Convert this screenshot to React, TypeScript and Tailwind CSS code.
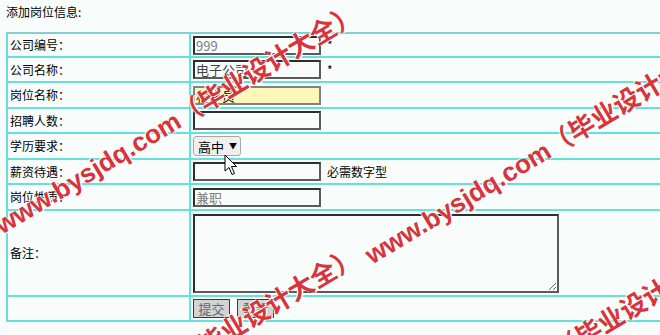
const LINE = 'border-[#66e0da]'

function Row({ h, label, children }: { h: string; label: string; children?: React.ReactNode }) {
  return (
    <div className={`flex border-b-2 ${LINE} ${h}`}>
      <div className={`w-[183px] shrink-0 border-r-2 ${LINE} flex items-center pl-[2px]`}>{label}</div>
      <div className="flex-1 flex items-center pl-[2px]">{children}</div>
    </div>
  )
}

const inputCls =
  'w-[128px] h-[19px] border-2 border-[#5a5a5a] border-t-[#2e2e2e] border-l-[#2e2e2e] px-[1px] text-[13px] leading-none outline-none'

function Watermark({ pos }: { pos: string }) {
  return (
    <div
      className={`absolute whitespace-nowrap [transform-origin:0_100%] [transform:rotate(-31deg)] text-[26px] leading-[30px] font-bold text-[#d8343c] [text-shadow:1px_1px_0_#ffffff,-1px_-1px_0_#ffffff] font-['Liberation_Sans','Noto_Sans_CJK_SC',sans-serif] ${pos}`}
    >
      www.bysjdq.com（毕业设计大全）
    </div>
  )
}

export default function App() {
  return (
    <div className="relative w-[660px] h-[335px] overflow-hidden bg-[#f8fdfc] text-black text-[12px] font-['Noto_Sans_CJK_SC',sans-serif]">
      <div className="h-[32px] pl-[6px] pt-[4px] leading-[16px]">添加岗位信息:</div>

      <div className={`ml-[6px] w-[720px] border-t-2 border-l-2 ${LINE} border-t-[#86cfcf]`}>
        <Row h="h-[24px]" label="公司编号：">
          <input readOnly defaultValue="999" className={`${inputCls} bg-[#f8fdfc] text-[#808080]`} />
          <span className="ml-[6px]">*</span>
        </Row>
        <Row h="h-[25px]" label="公司名称：">
          <input readOnly defaultValue="电子公司" className={`${inputCls} bg-[#f8fdfc] text-[#444]`} />
          <span className="ml-[6px]">*</span>
        </Row>
        <Row h="h-[26px]" label="岗位名称：">
          <input
            readOnly
            defaultValue="程序员"
            className="w-[128px] h-[19px] border-2 border-[#7c8290] px-[1px] text-[13px] leading-none outline-none bg-[#fdf7b8] text-black"
          />
        </Row>
        <Row h="h-[25px]" label="招聘人数：">
          <input readOnly className={`${inputCls} bg-[#f8fdfc]`} />
        </Row>
        <Row h="h-[26px]" label="学历要求：">
          <div className="w-[48px] h-[20px] border border-[#a8a8a8] rounded-[3px] bg-[#efefef] flex items-center pl-[4px] whitespace-nowrap text-[13px] leading-none">
            高中<span className="ml-[5px] text-[8px]">▼</span>
          </div>
        </Row>
        <Row h="h-[25px]" label="薪资待遇：">
          <input readOnly className={`${inputCls} bg-[#f8fdfc]`} />
          <span className="ml-[6px]">必需数字型</span>
        </Row>
        <Row h="h-[26px]" label="岗位性质：">
          <input readOnly defaultValue="兼职" className={`${inputCls} bg-[#f8fdfc] text-[#808080]`} />
        </Row>
        <Row h="h-[86px]" label="备注：">
          <textarea
            readOnly
            className="w-[366px] h-[79px] border-2 border-[#5a5a5a] border-t-[#2e2e2e] border-l-[#2e2e2e] bg-[#f8fdfc] outline-none resize"
          />
        </Row>
        <Row h="h-[25px]" label="">
          <div className="flex gap-[7px]">
            <button className="w-[37px] h-[19px] border border-[#3a3a3a] bg-[#d3d3d3] text-[#666] text-[13px] leading-none">
              提交
            </button>
            <button className="w-[37px] h-[19px] border border-[#3a3a3a] bg-[#d3d3d3] text-[#666] text-[13px] leading-none">
              重置
            </button>
          </div>
        </Row>
      </div>

      <div className="pointer-events-none absolute inset-0">
        <Watermark pos="left-[5px] top-[210px]" />
        <Watermark pos="left-[5px] top-[453px]" />
        <Watermark pos="left-[375px] top-[240px]" />
        <Watermark pos="left-[382px] top-[445px]" />
      </div>

      <svg className="absolute left-[224px] top-[154px]" width="14" height="22" viewBox="0 0 14 22">
        <path d="M1 1 L1 17 L5 13.5 L8 20.5 L10.5 19.5 L7.5 12.5 L12.5 12.5 Z" fill="#fff" stroke="#000" strokeWidth="1" strokeLinejoin="round" />
      </svg>
    </div>
  )
}
